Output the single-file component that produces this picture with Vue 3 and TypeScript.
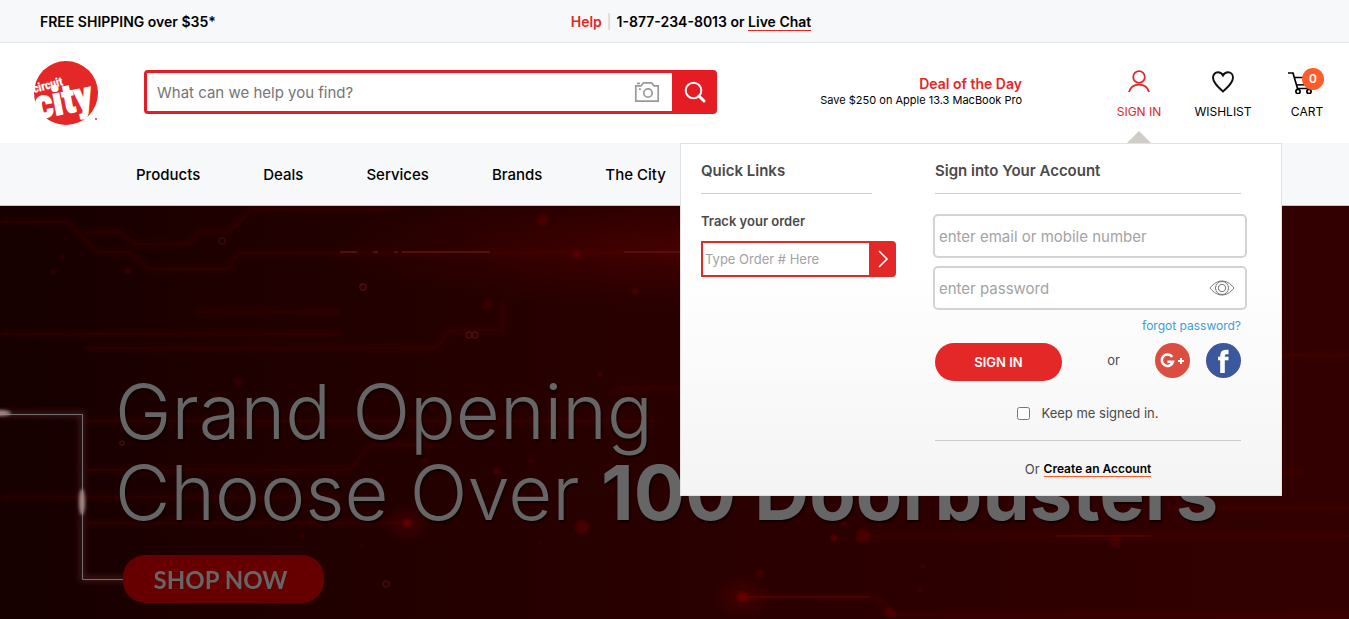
<script setup lang="ts">
import { ref } from 'vue'

interface Dot {
  x: number
  y: number
  r: number
  o: number
}

const navItems: string[] = ['Products', 'Deals', 'Services', 'Brands', 'The City']

const query = ref('')
const orderNumber = ref('')
const account = ref('')
const password = ref('')
const keepSignedIn = ref(false)
const showPassword = ref(false)

const traces: string[] = [
  'M0 16H68L98 46H130L148 63H228L238 47H680',
  'M85 26H120L134 38H190L200 25H230L252 2H400',
  'M0 128H340',
  'M85 142H437L450 124H503V96',
  'M195 106H340',
  'M85 215H655',
  'M85 264H350L370 239H440',
  'M0 291H340',
  'M85 317H400',
  'M610 188L622 182H680',
  'M1285 266H1303',
  'M1170 302H1349',
  'M866 330H1349',
  'M742 391H876L894 409H1349',
  'M1282 149H1349',
]

const dots: Dot[] = [
  { x: 62, y: 51, r: 2, o: 0.5 },
  { x: 53, y: 66, r: 2, o: 0.5 },
  { x: 128, y: 65, r: 3, o: 0.4 },
  { x: 543, y: 14, r: 6, o: 0.4 },
  { x: 577, y: 48, r: 4, o: 0.6 },
  { x: 635, y: 85, r: 3, o: 0.5 },
  { x: 487, y: 99, r: 5, o: 0.3 },
  { x: 600, y: 168, r: 2, o: 0.7 },
  { x: 238, y: 176, r: 4, o: 0.3 },
  { x: 217, y: 190, r: 2, o: 0.5 },
  { x: 497, y: 265, r: 3, o: 0.6 },
  { x: 424, y: 255, r: 2, o: 0.6 },
  { x: 531, y: 255, r: 2, o: 0.6 },
  { x: 407, y: 317, r: 4, o: 0.8 },
  { x: 582, y: 321, r: 7, o: 0.5 },
  { x: 540, y: 337, r: 1, o: 0.9 },
  { x: 362, y: 340, r: 1, o: 0.9 },
  { x: 302, y: 330, r: 3, o: 0.3 },
  { x: 834, y: 332, r: 3, o: 0.8 },
  { x: 863, y: 330, r: 7, o: 0.5 },
  { x: 843, y: 317, r: 2, o: 0.7 },
  { x: 742, y: 391, r: 5, o: 0.9 },
  { x: 760, y: 368, r: 4, o: 0.4 },
  { x: 923, y: 360, r: 2, o: 0.5 },
  { x: 920, y: 384, r: 2, o: 0.5 },
  { x: 1115, y: 335, r: 6, o: 0.4 },
  { x: 890, y: 407, r: 5, o: 0.5 },
]

const rings: Dot[] = [
  { x: 222, y: 35, r: 3, o: 0.4 },
  { x: 363, y: 81, r: 3, o: 0.7 },
  { x: 469, y: 129, r: 3, o: 0.6 },
  { x: 475, y: 129, r: 3, o: 0.6 },
  { x: 122, y: 237, r: 2, o: 0.6 },
  { x: 386, y: 378, r: 3, o: 0.5 },
]
</script>

<template>
  <div class="page">
    <div class="topbar">
      <strong class="shipping">FREE SHIPPING over $35*</strong>
      <p class="help">
        <a href="#help" class="help-link">Help</a><span class="bar">|</span>1-877-234-8013 or
        <a href="#chat" class="chat">Live Chat</a>
      </p>
    </div>

    <header class="header">
      <a href="#home" class="logo" aria-label="Circuit City">
        <svg width="66" height="66" viewBox="0 0 66 66">
          <circle cx="33" cy="33" r="32" fill="#e42727" />
          <g fill="#fff" stroke="#fff">
            <text class="logo-small" transform="translate(1 33) rotate(-15)" stroke-width="0.2">circuit</text>
            <text class="logo-big" transform="translate(4 59) rotate(-11)" stroke-width="1.4">city</text>
          </g>
          <circle cx="63" cy="59" r="1" fill="#e42727" />
        </svg>
      </a>

      <form class="search" @submit.prevent>
        <input v-model="query" type="text" aria-label="Search" placeholder="What can we help you find?" />
        <button type="button" class="camera" aria-label="Search by photo">
          <svg width="26" height="22" viewBox="0 0 26 22" fill="none" stroke="#999" stroke-width="1.7">
            <path d="M1.8 4.8H7L9.5 1.8H17.5L20 4.8H24.2V20.2H1.8Z" />
            <circle cx="14" cy="12" r="4.2" />
            <path d="M3 2.4H6M5 8.2H6.8" />
          </svg>
        </button>
        <button type="submit" class="search-go" aria-label="Search">
          <svg width="22" height="22" viewBox="0 0 22 22" fill="none" stroke="#fff" stroke-width="2">
            <circle cx="9.5" cy="9.5" r="7.8" />
            <path d="M15 15L20 20" stroke-width="3" stroke-linecap="round" />
          </svg>
        </button>
      </form>

      <p class="deal">
        <a href="#deal">Deal of the Day</a>
        <span>Save $250 on Apple 13.3 MacBook Pro</span>
      </p>

      <div class="actions">
        <a href="#signin" class="action active">
          <svg width="26" height="26" viewBox="0 0 26 26" fill="none" stroke="#e42727" stroke-width="1.8">
            <circle cx="13" cy="9" r="5.8" />
            <path d="M3 24C4.500 18.500 8.300 16.700 13 16.700S21.500 18.500 23 24" />
          </svg>
          SIGN IN
        </a>
        <a href="#wishlist" class="action">
          <svg width="26" height="26" viewBox="0 0 26 26" fill="none" stroke="#111" stroke-width="1.9">
            <path d="M13 23.500C8 18.800 3 14.500 3 9.700C3 6.300 5.300 4.300 8 4.300C10.300 4.300 12 5.500 13 7.500C14 5.500 15.700 4.300 18 4.300C20.700 4.300 23 6.300 23 9.700C23 14.500 18 18.800 13 23.500Z" />
          </svg>
          WISHLIST
        </a>
        <a href="#cart" class="action cart">
          <svg width="38" height="26" viewBox="0 0 38 26" fill="none" stroke="#000" stroke-width="1.700">
            <path d="M0 5H5L9.500 20.500H23.500M6.500 9.500H27L24 16.500L8.500 17" />
            <circle cx="10" cy="23.500" r="2.100" fill="#fff" />
            <circle cx="21" cy="23.500" r="2.100" fill="#fff" />
          </svg>
          <b class="badge">0</b>
          CART
        </a>
      </div>

      <section class="popup" aria-label="Account">
        <div class="links">
          <h2>Quick Links</h2>
          <form class="track" @submit.prevent>
            <label for="order">Track your order</label>
            <div class="track-row">
              <input id="order" v-model="orderNumber" type="text" placeholder="Type Order # Here" />
              <button type="submit" aria-label="Track order">
                <svg width="12" height="18" viewBox="0 0 12 18" fill="none" stroke="#fff" stroke-width="1.600">
                  <path d="M1 1L9 9L1 17" />
                </svg>
              </button>
            </div>
          </form>
        </div>

        <form class="signin" @submit.prevent>
          <h2>Sign into Your Account</h2>
          <input v-model="account" type="text" aria-label="Email or mobile number" placeholder="enter email or mobile number" />
          <div class="password">
            <input
              v-model="password"
              :type="showPassword ? 'text' : 'password'"
              aria-label="Password"
              placeholder="enter password"
            />
            <button type="button" aria-label="Show password" @click="showPassword = !showPassword">
              <svg width="26" height="16" viewBox="0 0 26 16" fill="none" stroke="#777" stroke-width="1">
                <path d="M1 8C5 3 9 1 13 1S21 3 25 8C21 13 17 15 13 15S5 13 1 8Z" />
                <circle cx="13" cy="8" r="6.500" />
                <circle cx="13" cy="8" r="3.700" />
              </svg>
            </button>
          </div>
          <a href="#forgot" class="forgot">forgot password?</a>
          <div class="submit-row">
            <button type="submit" class="submit">SIGN IN</button>
            <span>or</span>
            <button type="button" class="social google" aria-label="Sign in with Google+">
              <svg width="35" height="35" viewBox="0 0 35 35">
                <path d="M17.200 14A5.700 5.700 0 1 0 18 18.700H12.500" fill="none" stroke="#fff" stroke-width="2.600" />
                <path d="M26 15V21M23 18H29" stroke="#fff" stroke-width="2" />
              </svg>
            </button>
            <button type="button" class="social facebook" aria-label="Sign in with Facebook">
              <svg width="35" height="35" viewBox="0 0 35 35" fill="none" stroke="#fff">
                <path d="M22.500 9H20Q16.500 9 16.500 13V30" stroke-width="4.600" />
                <path d="M12 15.500H22.500" stroke-width="3.600" />
              </svg>
            </button>
          </div>
          <label class="keep"><input v-model="keepSignedIn" type="checkbox" />Keep me signed in.</label>
          <p class="create"><span>Or</span><a href="#create">Create an Account</a></p>
        </form>
      </section>
    </header>

    <nav class="nav">
      <a v-for="item in navItems" :key="item" href="#nav">{{ item }}</a>
    </nav>

    <main class="hero">
      <svg class="circuit" viewBox="0 0 1349 413" preserveAspectRatio="xMinYMin slice" aria-hidden="true">
        <defs>
          <linearGradient id="base" x1="0" x2="1" y1="0" y2="0">
            <stop offset="0" stop-color="#160000" />
            <stop offset="0.15" stop-color="#1e0000" />
            <stop offset="0.45" stop-color="#280000" />
            <stop offset="1" stop-color="#330000" />
          </linearGradient>
          <radialGradient id="glow">
            <stop offset="0" stop-color="#580000" stop-opacity="0.6" />
            <stop offset="1" stop-color="#480000" stop-opacity="0" />
          </radialGradient>
          <filter id="soft" x="-100%" y="-100%" width="300%" height="300%"><feGaussianBlur stdDeviation="1.500" /></filter>
          <filter id="haze" filterUnits="userSpaceOnUse" x="-20" y="-20" width="1400" height="460"><feGaussianBlur stdDeviation="3" /></filter>
        </defs>
        <rect width="1349" height="413" fill="url(#base)" />
        <ellipse cx="680" cy="42" rx="360" ry="60" fill="url(#glow)" />
        <ellipse cx="742" cy="391" rx="34" ry="26" fill="url(#glow)" />
        <ellipse cx="407" cy="317" rx="26" ry="20" fill="url(#glow)" />
        <g fill="none" stroke="#6a0000">
          <path v-for="d in traces" :key="d" :d="d" stroke-width="4" opacity="0.25" filter="url(#haze)" />
          <path v-for="d in traces" :key="d" :d="d" opacity="0.22" />
        </g>
        <path d="M340 46H357M373 46H378M394 46H398M402 46H490M624 46H690" stroke="#501010" stroke-width="2" />
        <path d="M742 391H870M1055 330H1150" stroke="#780000" stroke-width="2" opacity="0.35" />
        <g fill="#6a0303" filter="url(#soft)">
          <circle v-for="(d, i) in dots" :key="i" :cx="d.x" :cy="d.y" :r="d.r" :opacity="d.o" />
        </g>
        <g fill="none" stroke="#6a1212" stroke-width="1.500">
          <circle v-for="(d, i) in rings" :key="i" :cx="d.x" :cy="d.y" :r="d.r" :opacity="d.o" />
        </g>
        <path d="M0 208H82V373H130" fill="none" stroke="#7a3a3a" stroke-width="4" opacity="0.5" filter="url(#haze)" />
        <path d="M0 208.500H82.500V373.500H130" fill="none" stroke="#707070" stroke-width="1" />
        <g fill="#a08585" filter="url(#soft)">
          <ellipse cx="0" cy="207" rx="11" ry="3" />
          <ellipse cx="82" cy="296" rx="3" ry="13" />
        </g>
      </svg>
      <div class="hero-copy">
        <h1><span>Grand Opening</span><span>Choose Over <b>100 Doorbusters</b></span></h1>
        <a href="#shop" class="shop">SHOP NOW</a>
      </div>
    </main>
  </div>
</template>

<style>
body {
  margin: 0;
}
</style>

<style scoped>
.page {
  display: flex;
  flex-direction: column;
  min-height: 100vh;
  background: #fff;
  color: #000;
  font-family: Inter, 'Open Sans', sans-serif;
  font-size: 13px;
}
.page * {
  box-sizing: border-box;
}
a {
  color: inherit;
  text-decoration: none;
}
p,
h1,
h2 {
  margin: 0;
}
button {
  display: flex;
  align-items: center;
  justify-content: center;
  border: 0;
  padding: 0;
  background: none;
  font: inherit;
  cursor: pointer;
}
input {
  font: inherit;
  outline: none;
}
.topbar {
  display: grid;
  grid-template-columns: 1fr auto 1fr;
  align-items: center;
  height: 43px;
  padding: 0 40px;
  border-bottom: 1px solid #e2e4e6;
  background: #f7f8fa;
  font-size: 14px;
  font-weight: 600;
}
.shipping {
  font-weight: 600;
}
.help {
  margin-right: -33px;
}
.help-link {
  color: #e42727;
}
.bar {
  margin: 0 5px;
  color: #ccc;
  font-weight: 400;
}
.chat {
  border-bottom: 1px solid #e42727;
}
.header {
  position: relative;
  display: flex;
  align-items: flex-start;
  height: 100px;
  padding-left: 33px;
}
.logo {
  flex: none;
  margin-top: 17px;
}
.logo svg {
  display: block;
  overflow: visible;
}
.logo-small {
  font: 700 12px 'Roboto Condensed', 'Liberation Sans Narrow', 'DejaVu Sans Condensed', sans-serif;
}
.logo-big {
  font: 700 40px 'Roboto Condensed', 'Liberation Sans Narrow', 'DejaVu Sans Condensed', sans-serif;
}
.search {
  display: flex;
  flex: 0 1 573px;
  height: 44px;
  margin: 27px 0 0 45px;
  border: 3px solid #e51c23;
  border-radius: 4px;
  background: #e51c23;
}
.search input {
  flex: 1;
  min-width: 0;
  border: 0;
  padding: 0 10px;
  background: #fff;
  font-size: 15px;
}
.search input::placeholder {
  color: #757575;
  opacity: 1;
}
.camera {
  width: 38px;
  padding-right: 12px;
  background: #fff;
}
.search-go {
  width: 42px;
  padding-left: 3px;
}
.deal {
  display: flex;
  flex-direction: column;
  margin: 33px 75px 0 auto;
  text-align: right;
  font-size: 11px;
  line-height: 16px;
  white-space: nowrap;
}
.deal a {
  color: #e42727;
  font-size: 14px;
  font-weight: 600;
}
.actions {
  display: flex;
  margin-top: 25px;
}
.action {
  position: relative;
  display: flex;
  flex-direction: column;
  align-items: center;
  gap: 11px;
  width: 84px;
  font-size: 12px;
  line-height: 14px;
}
.action svg {
  display: block;
}
.active {
  color: #e42727;
}
.active::after {
  content: '';
  position: absolute;
  top: 63px;
  border: 12px solid transparent;
  border-top: 0;
  border-bottom-color: #d0ccc8;
}
.badge {
  position: absolute;
  top: 0;
  left: 37px;
  width: 22px;
  height: 22px;
  border-radius: 50%;
  background: #ff5c2b;
  color: #fff;
  font-weight: 600;
  line-height: 22px;
  text-align: center;
}
.popup {
  position: absolute;
  z-index: 2;
  top: 100px;
  right: 67px;
  display: grid;
  grid-template-columns: 195px 314px;
  column-gap: 37px;
  padding: 17px 34px 18px 20px;
  border: 1px solid #e2e2e2;
  background: linear-gradient(#fff 35%, #f4f4f4);
  color: #4a4a4a;
}
.popup h2 {
  height: 33px;
  border-bottom: 1px solid #ccc;
  font-size: 15px;
  font-weight: 600;
  line-height: 20px;
}
.links h2 {
  width: 171px;
}
.track label {
  display: block;
  margin: 17px 0 10px;
  font-weight: 600;
  line-height: 20px;
}
.track-row {
  display: flex;
  height: 36px;
}
.track-row input {
  flex: 1;
  min-width: 0;
  padding: 0 2px;
  border: 2px solid #e42727;
  background: #fff;
}
.track-row button {
  width: 25px;
  border-radius: 0 4px 4px 0;
  background: #e42727;
}
.popup input::placeholder {
  color: #a3a3a3;
  opacity: 1;
}
.signin {
  display: flex;
  flex-direction: column;
}
.signin h2 {
  margin: 0 6px 20px 2px;
}
.signin input:not([type='checkbox']) {
  width: 100%;
  height: 44px;
  padding: 0 4px;
  border: 2px solid #d3d3d3;
  border-radius: 5px;
  background: #fff;
  font-size: 15px;
}
.password {
  position: relative;
  margin-top: 8px;
}
.password button {
  position: absolute;
  top: 14px;
  right: 12px;
}
.forgot {
  align-self: flex-end;
  margin: 8px 6px 9px 0;
  color: #3a9edb;
  font-size: 12px;
  line-height: 16px;
}
.submit-row {
  display: flex;
  align-items: flex-start;
  height: 38px;
  padding: 0 6px 0 2px;
}
.submit {
  width: 127px;
  height: 38px;
  border-radius: 19px;
  background: #e42727;
  color: #fff;
  font-weight: 600;
}
.submit-row span {
  flex: 1;
  padding-left: 10px;
  line-height: 34px;
  text-align: center;
}
.social {
  width: 35px;
  height: 35px;
  border-radius: 50%;
}
.google {
  background: #dc4e41;
}
.facebook {
  margin-left: 16px;
  background: #3a589b;
}
.keep {
  display: flex;
  align-items: center;
  justify-content: center;
  height: 60px;
  margin: 0 6px 0 2px;
  padding-top: 5px;
  border-bottom: 1px solid #ccc;
}
.keep input {
  margin: 0 11px 0 0;
}
.create {
  display: flex;
  justify-content: center;
  gap: 4px;
  margin-top: 20px;
  padding-right: 4px;
  line-height: 16px;
}
.create a {
  border-bottom: 1px solid #ff5c2b;
  color: #000;
  font-size: 12px;
  font-weight: 600;
  line-height: 15px;
}
.nav {
  display: flex;
  align-items: center;
  gap: 63px;
  height: 63px;
  padding: 0 136px;
  border-bottom: 1px solid #c8c8c8;
  background: #f7f8fa;
  font-size: 15px;
  font-weight: 500;
}
.hero {
  position: relative;
  flex: 1;
  overflow: hidden;
  background: #240000;
}
.circuit {
  position: absolute;
  inset: 0;
  width: 100%;
  height: 100%;
}
.hero-copy {
  position: relative;
  padding: 165px 20px 16px 115px;
  color: #666;
}
.hero h1 {
  font-size: 76px;
  font-weight: 300;
  line-height: 81px;
  text-shadow: 1px 2px 2px #100000;
  white-space: nowrap;
}
.hero h1 span {
  display: block;
}
.hero b {
  font-weight: 700;
}
.shop {
  display: flex;
  align-items: center;
  justify-content: center;
  width: 201px;
  height: 48px;
  margin: 22px 0 0 8px;
  padding-right: 6px;
  border-radius: 22px;
  background: #660000;
  font-family: Lato, 'Open Sans', sans-serif;
  font-size: 24px;
  font-weight: 700;
}
</style>
